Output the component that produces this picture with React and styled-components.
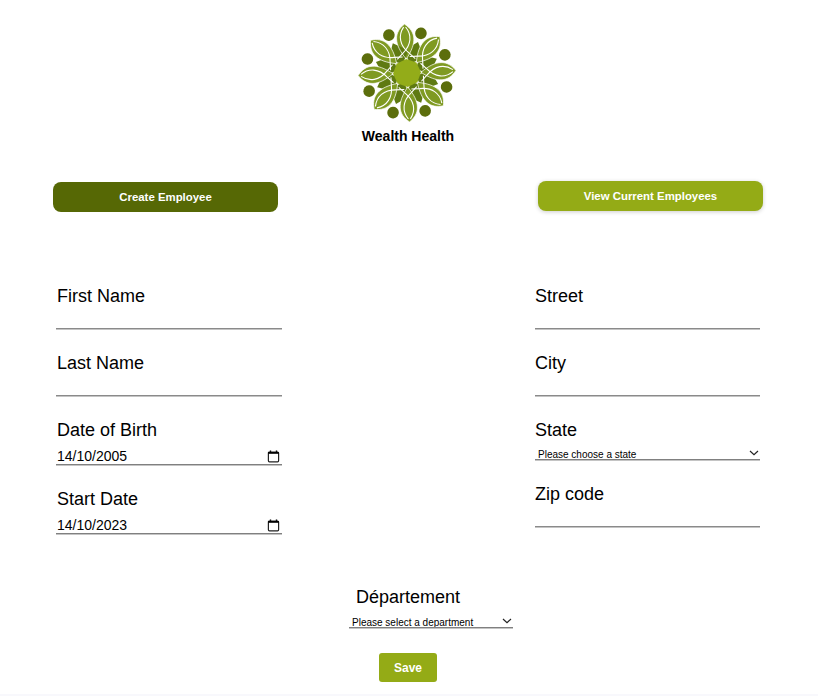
import React from 'react';
import styled, { createGlobalStyle } from 'styled-components';

const GlobalStyle = createGlobalStyle`
  html, body {
    margin: 0;
    padding: 0;
    background: #f8f8fc;
    font-family: "Liberation Sans", Arial, sans-serif;
  }
`;

const ROTATIONS = [0, 45, 90, 135, 180, 225, 270, 315];

const Logo = () => (
  <LogoSvg width="100" height="100" viewBox="-50 -50 100 100" aria-hidden="true">
    <g transform="rotate(-3)">
      {ROTATIONS.map(angle => (
        <g key={angle} transform={`rotate(${angle})`}>
          <circle cx="16" cy="-38.8" r="5.8" fill="#5c6e0c" />
          {/* lattice piece between two leaves */}
          <path d="M0 -10 L11 -20 L0 -33 L-11 -20 Z" fill="#5f7a12" transform="rotate(22.5)" />
          {/* leaf */}
          <path d="M0 -49 C11 -41 12 -30 0 -14 C-12 -30 -11 -41 0 -49 Z" fill="#7f9a22" />
        </g>
      ))}
      {ROTATIONS.map(angle => (
        <g key={angle} transform={`rotate(${angle})`} fill="none" stroke="#fff" strokeWidth="1.1">
          {/* arcs that cross inside the leaf and run on into the lattice */}
          <path d="M-1 -46 C-7 -38 -6 -28 3 -20 L9 -14" />
          <path d="M1 -46 C7 -38 6 -28 -3 -20 L-9 -14" />
          <path d="M0 -14 C-12 -30 -11 -41 0 -49 C11 -41 12 -30 0 -14" strokeWidth="0.7" />
        </g>
      ))}
      <polygon
        points="0,-14 9.9,-9.9 14,0 9.9,9.9 0,14 -9.9,9.9 -14,0 -9.9,-9.9"
        fill="#93ac19"
      />
    </g>
  </LogoSvg>
);

const CalendarIcon = () => (
  <svg width="13" height="13" viewBox="0 0 13 13" aria-hidden="true">
    <path d="M3.5 0.5V2M9.5 0.5V2" stroke="#000" strokeWidth="1.4" fill="none" />
    <rect x="1.4" y="2" width="10.2" height="9.8" rx="1" fill="none" stroke="#222" strokeWidth="1.2" />
    <rect x="1.2" y="2" width="10.6" height="1.8" fill="#000" />
  </svg>
);

const Chevron = () => (
  <ChevronSvg width="10" height="6" viewBox="0 0 10 6" aria-hidden="true">
    <path d="M1 1l4 3.6L9 1" fill="none" stroke="#222" strokeWidth="1.2" />
  </ChevronSvg>
);

const DateField = ({ label, value }) => (
  <Field $height="69px">
    <Label>{label}</Label>
    <DateRow>
      <DateInput type="text" defaultValue={value} />
      <CalendarIcon />
    </DateRow>
  </Field>
);

const TextField = ({ label }) => (
  <Field>
    <Label>{label}</Label>
    <TextInput type="text" />
  </Field>
);

export default function App() {
  return (
    <>
      <GlobalStyle />
      <Page>
        <Header>
          <Logo />
          <Title>Wealth Health</Title>
        </Header>

        <Nav>
          <NavButton $dark>Create Employee</NavButton>
          <NavButton>View Current Employees</NavButton>
        </Nav>

        <Form>
          <Column $indent="1px" $width="226px">
            <TextField label="First Name" />
            <TextField label="Last Name" />
            <DateField label="Date of Birth" value="14/10/2005" />
            <DateField label="Start Date" value="14/10/2023" />
          </Column>
          <Column $indent="0" $width="225px">
            <TextField label="Street" />
            <TextField label="City" />
            <Field $height="64px">
              <Label>State</Label>
              <SelectWrap>
                <Select>
                  <option>Please choose a state</option>
                </Select>
                <Chevron />
              </SelectWrap>
            </Field>
            <TextField label="Zip code" />
          </Column>
        </Form>

        <Department>
          <DepartmentLabel>Département</DepartmentLabel>
          <DepartmentSelectWrap>
            <Select>
              <option>Please select a department</option>
            </Select>
            <Chevron />
          </DepartmentSelectWrap>
          <SaveButton>Save</SaveButton>
        </Department>
      </Page>
    </>
  );
}

const Page = styled.main`
  height: 694px;
  background: #fff;
  overflow: hidden;
`;

const Header = styled.header`
  display: flex;
  flex-direction: column;
  align-items: center;
  padding-top: 23px;
  padding-right: 2px;
`;

const LogoSvg = styled.svg`
  margin-right: 2px;
`;

const Title = styled.h1`
  margin: 4px 0 0;
  font-size: 14px;
  line-height: 18px;
  font-weight: 700;
  color: #000;
`;

const Nav = styled.nav`
  display: flex;
  justify-content: space-between;
  align-items: flex-start;
  margin-top: 36px;
  padding: 0 55px 0 53px;
`;

const NavButton = styled.button`
  width: 225px;
  height: 30px;
  margin-top: ${props => (props.$dark ? '1px' : '0')};
  border: 0;
  border-radius: 8px;
  color: #fff;
  font-family: inherit;
  font-size: 11.4px;
  font-weight: 700;
  background: ${props => (props.$dark ? '#566805' : '#94ab16')};
  box-shadow: ${props => (props.$dark ? 'none' : '0 1px 4px rgba(0, 0, 0, 0.2)')};
`;

const Form = styled.form`
  display: flex;
  justify-content: space-between;
  margin-top: 73px;
  padding: 0 58px 0 56px;
`;

const Column = styled.div`
  --indent: ${props => props.$indent};
  width: ${props => props.$width};
  display: flex;
  flex-direction: column;
`;

const Field = styled.div`
  display: flex;
  flex-direction: column;
  height: ${props => props.$height || '67px'};
`;

const Label = styled.label`
  padding-left: var(--indent);
  font-size: 18px;
  line-height: 22px;
  color: #000;
`;

const TextInput = styled.input`
  width: 100%;
  height: 22px;
  padding: 0;
  box-sizing: border-box;
  border: 0;
  border-bottom: 1px solid #8a8a8a;
  box-shadow: 0 1px 0 #c4c4c4;
  outline: none;
`;

const DateRow = styled.div`
  display: flex;
  align-items: center;
  height: 24px;
  box-sizing: border-box;
  padding: 7px 2px 0 1px;
  border-bottom: 1px solid #808080;
  box-shadow: 0 1px 0 #c4c4c4;
`;

const DateInput = styled.input`
  flex: 1;
  min-width: 0;
  padding: 0;
  border: 0;
  font-family: inherit;
  font-size: 14px;
  color: #000;
  background: transparent;
  outline: none;
`;

const SelectWrap = styled.div`
  position: relative;
  height: 19px;
`;

const DepartmentSelectWrap = styled(SelectWrap)`
  width: 164px;
  margin-top: 1px;
  margin-left: 46px;
`;

const ChevronSvg = styled.svg`
  position: absolute;
  right: 1px;
  top: 9px;
  pointer-events: none;
`;

const Select = styled.select`
  appearance: none;
  display: block;
  width: 100%;
  height: 19px;
  padding: 8px 0 0 3px;
  box-sizing: border-box;
  border: 0;
  border-radius: 0;
  border-bottom: 1px solid #808080;
  box-shadow: 0 1px 0 #c4c4c4;
  font-family: inherit;
  font-size: 10px;
  color: #000;
  background: #fff;
  outline: none;
`;

const Department = styled.section`
  display: flex;
  flex-direction: column;
  align-items: center;
  margin-top: 29px;
  padding-right: 2px;
`;

const DepartmentLabel = styled.label`
  font-size: 18px;
  line-height: 22px;
  color: #000;
`;

const SaveButton = styled.button`
  width: 58px;
  height: 29px;
  margin-top: 25px;
  border: 0;
  border-radius: 3px;
  color: #fff;
  font-family: inherit;
  font-size: 12px;
  font-weight: 700;
  background: #94ab16;
`;
